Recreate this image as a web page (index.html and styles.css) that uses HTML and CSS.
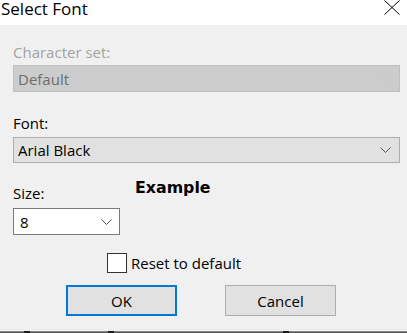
FILE: index.html
```html
<!DOCTYPE html>
<html>
<head>
<meta charset="utf-8">
<title>Select Font</title>
<link rel="stylesheet" href="styles.css">
</head>
<body>
<div class="dialog">
  <div class="titlebar">
    <span class="title">Select Font</span>
    <svg class="close" width="16" height="15" viewBox="0 0 16 15"><path d="M0.5 0.5 L15.5 14.5 M15.5 0.5 L0.5 14.5" stroke="#000" stroke-width="1" fill="none"/></svg>
  </div>
  <div class="form">
    <div class="label label-disabled label-first">Character set:</div>
    <div class="combo combo-disabled">
      <span class="combo-text">Default</span>
      <svg class="chev" width="11" height="6" viewBox="0 0 11 6"><path d="M0.5 0.5 L5.5 5.5 L10.5 0.5" stroke="#c4c4c4" fill="none"/></svg>
    </div>
    <div class="label label-font">Font:</div>
    <div class="combo combo-font">
      <span class="combo-text">Arial Black</span>
      <svg class="chev" width="11" height="6" viewBox="0 0 11 6"><path d="M0.5 0.5 L5.5 5.5 L10.5 0.5" stroke="#555" fill="none"/></svg>
    </div>
    <div class="size-row">
      <div class="size-col">
        <div class="label label-size">Size:</div>
        <div class="combo combo-size">
          <span class="combo-text">8</span>
          <svg class="chev" width="11" height="6" viewBox="0 0 11 6"><path d="M0.5 0.5 L5.5 5.5 L10.5 0.5" stroke="#555" fill="none"/></svg>
        </div>
      </div>
      <div class="example">Example</div>
    </div>
    <div class="check-row">
      <span class="checkbox"></span>
      <span class="check-label">Reset to default</span>
    </div>
    <div class="buttons">
      <div class="btn btn-default">OK</div>
      <div class="btn">Cancel</div>
    </div>
  </div>
  <div class="footer">
    <span class="mark mark-1"></span>
    <span class="mark mark-2"></span>
    <span class="mark mark-3"></span>
  </div>
</div>
</body>
</html>
```
FILE: styles.css
```css
html, body {
  margin: 0;
  padding: 0;
}
body {
  width: 407px;
  height: 333px;
  overflow: hidden;
  background: #f0f0f0;
  font-family: "Open Sans", "Noto Sans", sans-serif;
  font-size: 15px;
  color: #000;
}
.dialog {
  display: flex;
  flex-direction: column;
  height: 333px;
}
.titlebar {
  height: 25px;
  background: #fff;
  display: flex;
  justify-content: space-between;
  align-items: flex-start;
  flex: none;
}
.title {
  font-size: 17px;
  line-height: 18px;
  padding-left: 1px;
}
.close {
  margin-right: 7px;
  display: block;
}
.form {
  padding: 0 7px 0 13px;
  flex: none;
}
.label {
  line-height: 20px;
  height: 20px;
}
.label-first {
  margin-top: 17px;
}
.label-disabled {
  color: #a3a3a3;
}
.label-font {
  margin-top: 21px;
}
.combo {
  box-sizing: border-box;
  height: 27px;
  display: flex;
  align-items: center;
  justify-content: space-between;
  padding: 0 8px 0 4px;
  border: 1px solid #adadad;
  background: #e1e1e1;
}
.combo-disabled {
  margin-top: 3px;
  background: #cccccc;
  border-color: #bfbfbf;
  color: #6d6d6d;
}
.combo-font {
  margin-top: 4px;
  height: 26px;
}
.combo-text {
  line-height: 20px;
}
.chev {
  display: block;
}
.size-row {
  display: flex;
  align-items: flex-start;
  gap: 15px;
}
.size-col {
  width: 107px;
  padding-top: 20px;
}
.combo-size {
  margin-top: 5px;
  background: #fff;
  border-color: #7a7a7a;
  padding-left: 6px;
  padding-right: 7px;
}
.example {
  padding-top: 15px;
  font-family: "DejaVu Sans", "Liberation Sans", sans-serif;
  font-weight: bold;
  font-size: 15.8px;
  line-height: 20px;
}
.check-row {
  display: flex;
  align-items: center;
  margin-top: 18px;
  padding-left: 94px;
}
.checkbox {
  box-sizing: border-box;
  width: 20px;
  height: 20px;
  border: 1px solid #333;
  background: #fff;
  flex: none;
}
.check-label {
  margin-left: 4px;
  line-height: 20px;
}
.buttons {
  display: flex;
  gap: 48px;
  margin-top: 12px;
  padding-left: 53px;
}
.btn {
  box-sizing: border-box;
  width: 111px;
  height: 31px;
  border: 1px solid #adadad;
  background: #e1e1e1;
  display: flex;
  align-items: center;
  justify-content: center;
  line-height: 20px;
}
.btn-default {
  border: 2px solid #0078d7;
}
.footer {
  margin-top: 15px;
  height: 2px;
  border-top: 1px solid #8a8a8a;
  background: #555;
  display: flex;
  flex: none;
}
.mark {
  width: 6px;
  height: 2px;
  margin-top: -1px;
  background: #1a1a1a;
}
.mark-1 { margin-left: 24px; }
.mark-2 { margin-left: 78px; }
.mark-3 { margin-left: 169px; }
```
